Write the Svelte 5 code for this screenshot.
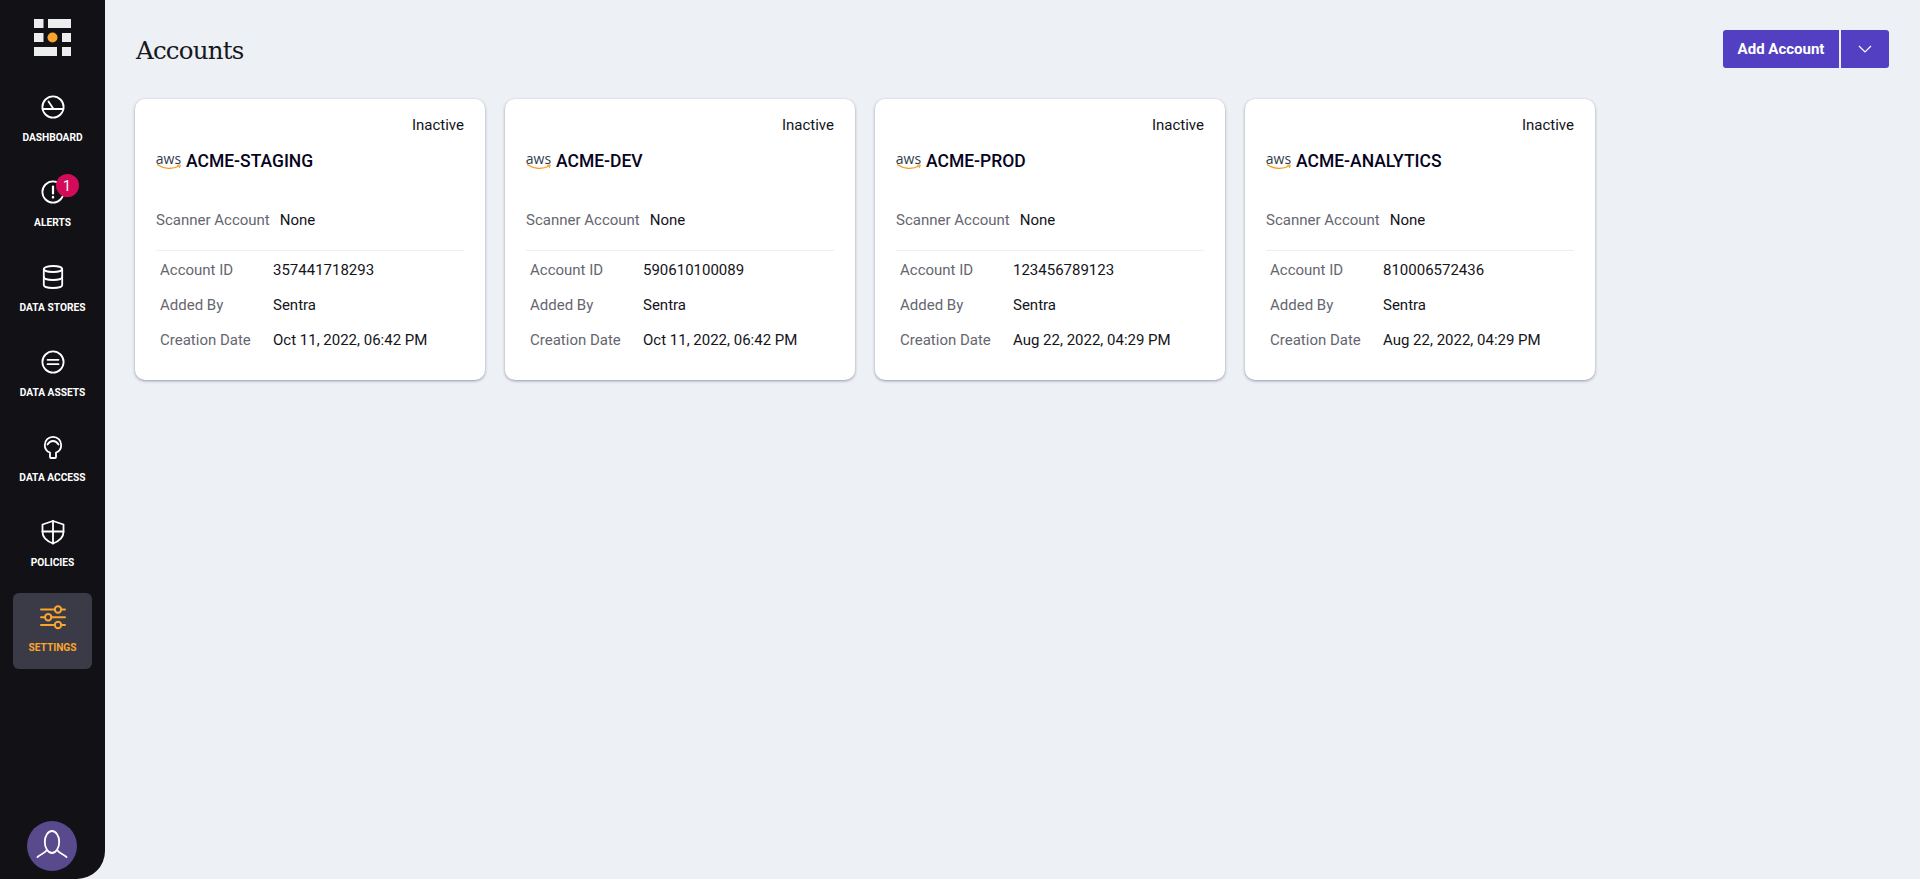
<script>
  const nav = [
    { label: 'DASHBOARD', icon: 'dashboard' },
    { label: 'ALERTS', icon: 'alerts', badge: 1 },
    { label: 'DATA STORES', icon: 'stores' },
    { label: 'DATA ASSETS', icon: 'assets' },
    { label: 'DATA ACCESS', icon: 'access' },
    { label: 'POLICIES', icon: 'policies' },
    { label: 'SETTINGS', icon: 'settings', active: true }
  ];

  const accounts = [
    { name: 'ACME-STAGING', id: '357441718293', date: 'Oct 11, 2022, 06:42 PM' },
    { name: 'ACME-DEV', id: '590610100089', date: 'Oct 11, 2022, 06:42 PM' },
    { name: 'ACME-PROD', id: '123456789123', date: 'Aug 22, 2022, 04:29 PM' },
    { name: 'ACME-ANALYTICS', id: '810006572436', date: 'Aug 22, 2022, 04:29 PM' }
  ];
</script>

<div class="layout">
  <aside class="sidebar">
    <svg class="logo" width="37" height="37" viewBox="0 0 37 37">
      <rect x="0" y="0" width="9.500" height="9" fill="#eceded" />
      <rect x="14" y="0" width="23" height="9" fill="#eceded" />
      <rect x="0" y="14" width="9.500" height="9" fill="#eceded" />
      <circle cx="18.500" cy="18.500" r="5" fill="#f9a52e" />
      <rect x="28" y="14" width="9" height="9" fill="#eceded" />
      <rect x="0" y="28" width="23" height="9" fill="#eceded" />
      <rect x="28" y="28" width="9" height="9" fill="#eceded" />
    </svg>

    <nav class="nav">
      {#each nav as item}
        <div class="nav-item" class:active={item.active}>
          <div class="nav-icon">
            <svg width="26" height="26" viewBox="0 0 26 26" fill="none" stroke="currentColor" stroke-width="1.800" stroke-linecap="round" stroke-linejoin="round">
              {#if item.icon === 'dashboard'}
                <circle cx="13" cy="13" r="10.600" />
                <path d="M2.600 15h20.800M13.500 15 8.500 7.500" />
              {:else if item.icon === 'alerts'}
                <circle cx="13" cy="13" r="10.600" />
                <path d="M13 7.500v7" stroke-width="2.200" />
                <path d="M13 18v.4" stroke-width="2.400" />
              {:else if item.icon === 'stores'}
                <ellipse cx="13" cy="5" rx="9.200" ry="3" />
                <path d="M3.800 5v16c0 1.700 4.100 3 9.200 3s9.200-1.300 9.200-3V5" />
                <path d="M3.800 13c0 1.700 4.100 3 9.200 3s9.200-1.300 9.200-3" />
              {:else if item.icon === 'assets'}
                <circle cx="13" cy="13" r="10.600" />
                <path d="M7.500 10.800h11M7.500 15.200h11" />
              {:else if item.icon === 'access'}
                <path d="M10 18.500C6.500 17.500 4.800 14.500 4.800 11a8.200 8.200 0 0 1 16.400 0C21.200 14.500 19.500 17.500 16 18.500V23a1 1 0 0 1-1 1h-4a1 1 0 0 1-1-1z" />
                <path d="M7.500 10.500c1.500-2.500 3.500-3.500 5.500-3.500s4 1 5.500 3.500" />
              {:else if item.icon === 'policies'}
                <path d="M13 2 23.500 5.500v7.500c0 5-4.200 9-10.500 11.500C6.700 22 2.500 18 2.500 13V5.500z" />
                <path d="M13 2v22.500M2.500 12.500h21" />
              {:else if item.icon === 'settings'}
                <g stroke-width="2">
                  <path d="M1 5.500h13.800M21.200 5.500H25M1 13.200h4M11.400 13.200H25M1 21h13.800M21.200 21H25" />
                  <circle cx="18" cy="5.500" r="3.200" />
                  <circle cx="8.200" cy="13.200" r="3.200" />
                  <circle cx="18" cy="21" r="3.200" />
                </g>
              {/if}
            </svg>
            {#if item.badge}<span class="badge">{item.badge}</span>{/if}
          </div>
          <span class="nav-label">{item.label}</span>
        </div>
      {/each}
    </nav>

    <div class="avatar">
      <svg width="32" height="32" viewBox="0 0 32 32" fill="none" stroke="#fff" stroke-width="1.800" stroke-linecap="round">
        <ellipse cx="16" cy="12" rx="7.200" ry="11" />
        <path d="M1.500 27c3-3 7-3.500 9-6.500M30.500 27c-3-3-7-3.500-9-6.500" />
      </svg>
    </div>
  </aside>

  <main class="content">
    <header class="page-header">
      <h1>Accounts</h1>
      <div class="split-button">
        <button class="primary">Add Account</button>
        <button class="toggle" aria-label="More">
          <svg width="14" height="8" viewBox="0 0 14 8" fill="none" stroke="#fff" stroke-width="1.200">
            <path d="M1 1l6 6 6-6" />
          </svg>
        </button>
      </div>
    </header>

    <section class="cards">
      {#each accounts as account}
        <article class="card">
          <div class="status">Inactive</div>
          <div class="title-row">
            <span class="aws">
              <span class="aws-text">aws</span>
              <svg width="24" height="6" viewBox="0 0 24 6" fill="none">
                <path d="M.5 .8C7 5.200 16 5.400 22 2" stroke="#f79a1c" stroke-width="1.300" stroke-linecap="round" />
                <path d="M20 1.300 23.300 .9 22.300 4" stroke="#f79a1c" stroke-width="1" fill="none" />
              </svg>
            </span>
            <h2>{account.name}</h2>
          </div>
          <div class="scanner">
            <span class="key">Scanner Account</span>
            <span>None</span>
          </div>
          <dl class="details">
            <dt>Account ID</dt><dd>{account.id}</dd>
            <dt>Added By</dt><dd>Sentra</dd>
            <dt>Creation Date</dt><dd>{account.date}</dd>
          </dl>
        </article>
      {/each}
    </section>
  </main>
</div>

<style>
  :global(body) {
    margin: 0;
    background: #edf0f5;
    font-family: Roboto, "Liberation Sans", sans-serif;
  }

  .layout {
    display: flex;
    height: 879px;
    overflow: hidden;
  }

  .sidebar {
    width: 105px;
    flex: none;
    background: #111116;
    border-bottom-right-radius: 28px;
    display: flex;
    flex-direction: column;
    align-items: center;
    padding-top: 19px;
    box-sizing: border-box;
  }

  .logo {
    flex: none;
    display: block;
  }

  .nav {
    margin-top: 27px;
    display: flex;
    flex-direction: column;
    gap: 9px;
    align-items: center;
  }

  .nav-item {
    width: 79px;
    height: 76px;
    border-radius: 6px;
    display: flex;
    flex-direction: column;
    align-items: center;
    color: #fff;
  }

  .nav-item.active {
    background: #3b3b47;
    color: #f9a52e;
  }

  .nav-icon {
    position: relative;
    width: 26px;
    height: 26px;
    margin-top: 11px;
    margin-bottom: 12px;
    flex: none;
  }

  .nav-icon svg {
    display: block;
  }

  .badge {
    position: absolute;
    left: 16px;
    top: -5px;
    width: 23px;
    height: 23px;
    border-radius: 50%;
    background: #d20c5a;
    color: #fff;
    font-size: 14px;
    display: flex;
    align-items: center;
    justify-content: center;
  }

  .nav-label {
    font-size: 10.200px;
    font-weight: 700;
    line-height: 12px;
    white-space: nowrap;
  }

  .avatar {
    margin-top: auto;
    margin-bottom: 8px;
    margin-right: 1px;
    width: 50px;
    height: 50px;
    border-radius: 50%;
    background: #584a8c;
    display: flex;
    align-items: center;
    justify-content: center;
  }

  .content {
    flex: 1;
    padding: 30px 31px 0 30px;
    min-width: 0;
  }

  .page-header {
    display: flex;
    justify-content: space-between;
    align-items: center;
    height: 38px;
    margin-bottom: 31px;
  }

  h1 {
    margin: 2px 0 0 1px;
    font-family: "DejaVu Serif", "Liberation Serif", serif;
    font-size: 24.500px;
    font-weight: 400;
    letter-spacing: -0.8px;
    color: #17171c;
  }

  .split-button {
    display: flex;
    gap: 2px;
  }

  button {
    border: none;
    background: #533fc2;
    color: #fff;
    font-family: inherit;
    height: 38px;
    padding: 0;
  }

  .primary {
    width: 116px;
    font-size: 15px;
    font-weight: 700;
    border-radius: 3px 0 0 3px;
  }

  .toggle {
    width: 48px;
    border-radius: 0 3px 3px 0;
    display: flex;
    align-items: center;
    justify-content: center;
  }

  .cards {
    display: flex;
    gap: 20px;
  }

  .card {
    width: 350px;
    height: 281px;
    box-sizing: border-box;
    background: #fff;
    border-radius: 10px;
    box-shadow: 0 1px 3px rgba(40, 45, 70, 0.45);
    padding: 16px 21px 0;
    font-size: 15px;
    color: #14141a;
  }

  .status {
    text-align: right;
    line-height: 20px;
  }

  .title-row {
    display: flex;
    align-items: center;
    gap: 5px;
    margin-top: 10px;
    height: 32px;
  }

  .aws {
    display: flex;
    flex-direction: column;
    align-items: center;
    width: 25px;
    color: #2f3a4c;
  }

  .aws-text {
    font-size: 14px;
    line-height: 11px;
    font-family: "Open Sans", sans-serif;
    font-weight: 500;
  }

  .aws svg {
    display: block;
  }

  h2 {
    margin: 0;
    font-size: 17.500px;
    font-weight: 500;
    color: #060321;
  }

  .scanner {
    display: flex;
    gap: 10px;
    margin-top: 33px;
    line-height: 20px;
    padding-bottom: 20px;
    border-bottom: 1px solid #eeeff2;
  }

  .key,
  dt {
    color: #666670;
  }

  .details {
    display: grid;
    grid-template-columns: 113px 1fr;
    row-gap: 15px;
    margin: 9px 0 0;
    padding: 0 4px;
    line-height: 20px;
  }

  dt,
  dd {
    margin: 0;
  }
</style>
